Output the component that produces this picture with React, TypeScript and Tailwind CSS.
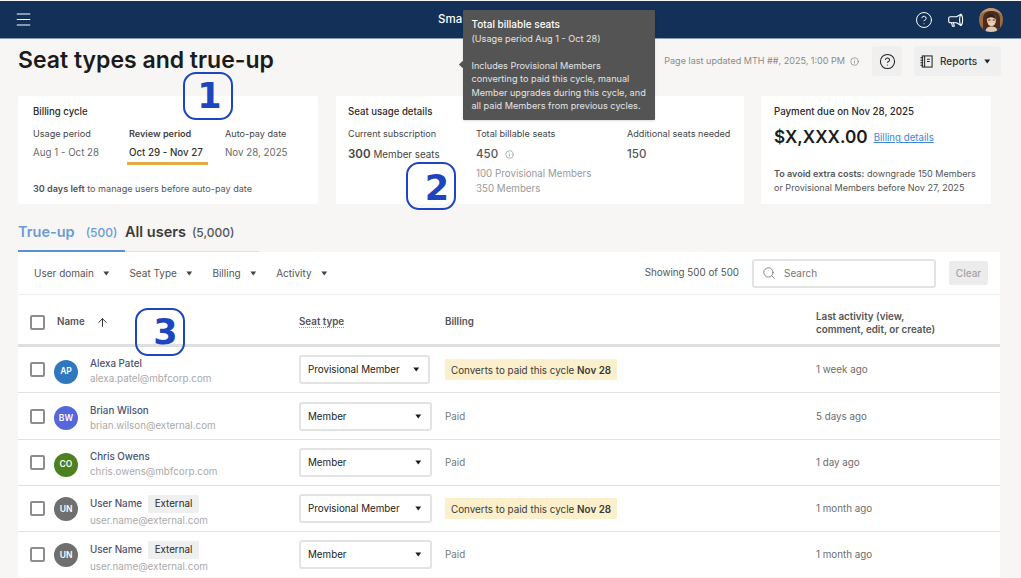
import React from "react";
import { CircleHelp, Info, Menu, Search, ArrowUp } from "lucide-react";

const Caret = ({ className = "" }: { className?: string }) => (
  <svg viewBox="0 0 10 7" className={`w-[6.500px] h-[5px] ${className}`}>
    <path d="M0.5 0.5h9L5 6.5z" fill="currentColor" />
  </svg>
);

const Megaphone = () => (
  <svg viewBox="0 0 16 16" className="w-[16px] h-[16px]" fill="none" stroke="#fff" strokeWidth="1.100" strokeLinejoin="round" strokeLinecap="round">
    <path d="M2.300 4.800h6.200L13 2.200c1.300 1 1.600 3.300 1.600 5.800s-.3 4.500-1.600 5.500L8.500 10.700H2.300C1.300 10.700.7 10 .7 9.300V6.200c0-.7.6-1.400 1.600-1.400z" />
    <path d="M3.500 10.700l1 3.600h1.800l-.8-3.600" />
    <path d="M12.800 2.300c-1 1.300-1.200 3.500-1.200 5.700s.2 4.300 1.200 5.500" />
  </svg>
);

const Avatar = () => (
  <svg viewBox="0 0 24 24" className="w-[24px] h-[24px] rounded-full">
    <rect width="24" height="24" fill="#9b6a45" />
    <path d="M0 0h24v10c-2-5-4-7-12-7S2 5 0 10z" fill="#c09a72" />
    <path d="M4 24V11C4 5 8 3 12.500 3S21 5 21 11v13z" fill="#4a2b1c" />
    <ellipse cx="12.500" cy="12" rx="4.600" ry="6.200" fill="#e8c4a8" />
    <path d="M7.500 11c.5-4 3-5.500 5.500-5.500 2.200.5 4 2.500 4 6-2-2.500-5.500-3.500-9.500-.5z" fill="#33201a" />
    <path d="M9 12h2.500M13.800 12h2.500" stroke="#3a2a24" strokeWidth="0.900" />
    <path d="M6 24c1-4.500 3.500-5.500 6.500-5.500S18 19.500 19 24z" fill="#d8c8b4" />
    <path d="M10.500 15.500c1.300.8 2.700.8 4 0" stroke="#f6eee8" strokeWidth="0.800" fill="none" />
  </svg>
);

const Badge = ({ n, className }: { n: string; className: string }) => (
  <div className={`absolute w-[50px] h-[48px] rounded-[13px] border-[2.750px] border-[#1d45bf] flex items-center justify-center text-[#1d45bf] text-[35px] font-bold font-['DejaVu_Sans',sans-serif] leading-none ${className}`}>
    {n}
  </div>
);

const Select = ({ label, wide = true }: { label: string; wide?: boolean }) => (
  <div className={`h-[29px] ${wide ? "w-[133px]" : "w-[131px]"} bg-white border-2 border-[#e3e3e3] rounded-[3px] flex items-center justify-between pl-[7px] pr-[9px] text-[9.800px] text-[#222]`}>
    <span className="pt-[2px]">{label}</span>
    <Caret className="text-[#1c1c1c]" />
  </div>
);

const Checkbox = () => <div className="w-[15px] h-[15px] rounded-[2px] border-2 border-[#8d8d8d] bg-white" />;

const Converts = () => (
  <span className="inline-block bg-[#fbf0cb] text-[#3b3a36] text-[9.850px] px-[6px] pt-[4px] pb-[3px] leading-[14px] rounded-[1px]">
    Converts to paid this cycle <b className="font-semibold">Nov 28</b>
  </span>
);

type RowData = {
  initials: string;
  color: string;
  name: string;
  email: string;
  external?: boolean;
  seat: string;
  converts?: boolean;
  activity: string;
  height: string;
};

const rows: RowData[] = [
  { initials: "AP", color: "bg-[#2f78c0]", name: "Alexa Patel", email: "alexa.patel@mbfcorp.com", seat: "Provisional Member", converts: true, activity: "1 week ago", height: "h-[46px]" },
  { initials: "BW", color: "bg-[#5667dc]", name: "Brian Wilson", email: "brian.wilson@external.com", seat: "Member", activity: "5 days ago", height: "h-[47px]" },
  { initials: "CO", color: "bg-[#4b8121]", name: "Chris Owens", email: "chris.owens@mbfcorp.com", seat: "Member", activity: "1 day ago", height: "h-[46px]" },
  { initials: "UN", color: "bg-[#6f6f6f]", name: "User Name", email: "user.name@external.com", external: true, seat: "Provisional Member", converts: true, activity: "1 month ago", height: "h-[46px]" },
  { initials: "UN", color: "bg-[#6f6f6f]", name: "User Name", email: "user.name@external.com", external: true, seat: "Member", activity: "1 month ago", height: "h-[45px]" },
];

const Row = ({ row, index }: { row: RowData; index: number }) => (
  <div className={`${row.height} grid grid-cols-[281px_146px_371px_1fr] items-center border-b-[1.500px] border-[#e2e2e2] last:border-b-0`}>
    <div className="flex items-center pl-[12px]">
      <Checkbox />
      <div className={`ml-[9px] ${row.external ? "mt-[1px]" : "mt-[4px]"} w-[24px] h-[24px] rounded-full ${row.color} text-white text-[8.500px] font-semibold flex items-center justify-center`}>
        {row.initials}
      </div>
      <div className={`ml-[12px] ${row.external ? "mt-[6px]" : "mt-[4px]"}`}>
        <div className="flex items-center gap-[6px] text-[9.800px] font-medium text-[#4d5272] leading-[14px]">
          {row.name}
          {row.external && (
            <span className="bg-[#efefef] text-[#2a2a2a] font-normal px-[6.500px] h-[18px] flex items-center rounded-[1px]">External</span>
          )}
        </div>
        <div className="text-[9.800px] text-[#a9a9a9] leading-[14px] mt-[1px]">{row.email}</div>
      </div>
    </div>
    <Select label={row.seat} wide={index !== 0} />
    <div className={`text-[9.800px] text-[#787878] ${row.converts ? "" : "mt-[2px]"}`}>{row.converts ? <Converts /> : "Paid"}</div>
    <div className="text-[9.800px] text-[#6d6d6d] mt-[2px]">{row.activity}</div>
  </div>
);

const Filter = ({ label }: { label: string }) => (
  <div className="flex items-center gap-[9px] text-[10px] text-[#555]">
    {label}
    <Caret className="text-[#444]" />
  </div>
);

export default function App() {
  return (
    <div className="relative w-[1021px] h-[578px] overflow-hidden bg-[#f7f6f5] font-['Inter',sans-serif] pt-px">
      {/* Top bar */}
      <header className="h-[38px] bg-[#123058] border-b border-[#8b9cb5] flex items-center justify-between pl-[14px] pr-[18px]">
        <Menu className="w-[19px] h-[19px] text-white" strokeWidth={1.300} />
        <div className="ml-[405px] text-[11.500px] font-medium text-white">Sma</div>
        <div className="flex-1" />
        <div className="flex items-center gap-[15px]">
          <CircleHelp className="w-[18px] h-[18px] text-white" strokeWidth={1.300} />
          <Megaphone />
          <Avatar />
        </div>
      </header>

      {/* Title row */}
      <div className="h-[57px] flex items-center pl-[18px] pr-[20px]">
        <h1 className="text-[23px] font-semibold text-[#1b1b1b] mb-[14px]">Seat types and true-up</h1>
        <div className="flex-1" />
        <div className="flex items-center gap-[5px] text-[9.050px] text-[#8a8a8a] mb-[13px]">
          Page last updated MTH ##, 2025, 1:00 PM
          <Info className="w-[9px] h-[9px]" />
        </div>
        <div className="ml-[13px] mb-[13px] w-[30px] h-[30px] bg-[#efefef] rounded-[3px] flex items-center justify-center">
          <CircleHelp className="w-[17px] h-[17px] text-[#222]" strokeWidth={1.500} />
        </div>
        <div className="ml-[12px] mb-[13px] w-[87px] h-[30px] bg-[#efefef] rounded-[3px] flex items-center pl-[6px] gap-[7px] text-[10px] font-medium text-[#333]">
          <svg viewBox="0 0 14 14" className="w-[13px] h-[13px]" fill="none" stroke="#222" strokeWidth="1.100">
            <rect x="2.500" y="1" width="10.500" height="12" />
            <path d="M5 1v12M7.500 4.500h3M7.500 7h3M.5 3h3M.5 5.700h3M.5 8.400h3M.5 11h3" />
          </svg>
          Reports
          <Caret className="text-[#222]" />
        </div>
      </div>

      {/* Summary cards */}
      <div className="flex pl-[18px] items-start">
        <section className="w-[300px] h-[108px] bg-white rounded-[2px] pt-[9px] pl-[15px]">
          <div className="text-[9.650px] font-medium text-[#2a2a2a] leading-[14px]">Billing cycle</div>
          <div className="flex mt-[8px] text-[9.100px] leading-[14px]">
            <div className="w-[96px]">
              <div className="text-[#444]">Usage period</div>
              <div className="mt-[5px] text-[#6a6a6a] text-[9.750px]">Aug 1 - Oct 28</div>
            </div>
            <div className="w-[96px]">
              <div className="font-semibold text-[#444]">Review period</div>
              <div className="mt-[5px] text-[#333] font-medium text-[9.750px] pb-[2px] border-b-[3px] border-[#dfac47] w-[81px] -ml-[2px] pl-[2px]">Oct 29 - Nov 27</div>
            </div>
            <div>
              <div className="text-[#444]">Auto-pay date</div>
              <div className="mt-[5px] text-[#6a6a6a] text-[9.750px]">Nov 28, 2025</div>
            </div>
          </div>
          <div className="mt-[17px] text-[9.100px] text-[#555] leading-[14px]"><b className="font-semibold">30 days left</b> to manage users before auto-pay date</div>
        </section>

        <section className="ml-[18px] w-[408px] h-[108px] bg-white rounded-[2px] pt-[9px] pl-[12px]">
          <div className="text-[9.650px] font-medium text-[#2a2a2a] leading-[14px]">Seat usage details</div>
          <div className="flex mt-[8px] text-[9.100px] leading-[14px] text-[#444]">
            <div className="w-[128px]">
              <div>Current subscription</div>
              <div className="mt-[6px] text-[9.800px] flex items-baseline gap-[3px]"><b className="font-semibold text-[11.500px]">300</b> Member seats</div>
            </div>
            <div className="w-[151px]">
              <div>Total billable seats</div>
              <div className="mt-[6px] flex items-center gap-[7px] text-[11.500px] font-medium text-[#555]">450 <Info className="w-[9px] h-[9px] text-[#999]" /></div>
              <div className="mt-[5px] text-[#999] text-[9.750px] leading-[15px]">100 Provisional Members<br />350 Members</div>
            </div>
            <div>
              <div>Additional seats needed</div>
              <div className="mt-[6px] text-[11.500px] font-medium text-[#555]">150</div>
            </div>
          </div>
        </section>

        <section className="ml-[17px] w-[230px] h-[108px] bg-white rounded-[2px] pt-[9px] pl-[13px]">
          <div className="text-[9.700px] font-medium text-[#2a2a2a] leading-[14px]">Payment due on Nov 28, 2025</div>
          <div className="mt-[6px] flex items-center gap-[6px]">
            <span className="text-[17.200px] font-semibold text-[#1b1b1b] leading-[24px]">$X,XXX.00</span>
            <span className="text-[9.700px] text-[#3f86d4] underline mt-[3px]">Billing details</span>
          </div>
          <div className="mt-[18px] text-[9.050px] leading-[13.500px] text-[#555]"><b className="font-semibold">To avoid extra costs:</b> downgrade 150 Members<br />or Provisional Members before Nov 27, 2025</div>
        </section>
      </div>

      {/* Tabs */}
      <div className="ml-[18px] mt-[17px] h-[31px] w-[241px] flex items-start border-b border-[#e2e2e2]">
        <div className="w-[107px] h-[31px] border-b-2 border-[#5a91d6] text-[#6c9bd6] flex items-baseline pt-[2px]">
          <span className="text-[14.500px] font-semibold leading-[18px]">True-up</span>
          <span className="ml-[11px] text-[12px] font-medium">(500)</span>
        </div>
        <div className="text-[#3c3c3c] flex items-baseline pt-[2px]">
          <span className="text-[14.500px] font-semibold leading-[18px]">All users</span>
          <span className="ml-[6px] text-[12px] font-medium text-[#555]">(5,000)</span>
        </div>
      </div>

      {/* Table */}
      <div className="ml-[18px] w-[982px] bg-white">
        <div className="h-[43px] flex items-center border-b border-[#ebedf3] pl-[16px] pr-[12px]">
          <div className="flex gap-[20px]">
            <Filter label="User domain" />
            <Filter label="Seat Type" />
            <Filter label="Billing" />
            <Filter label="Activity" />
          </div>
          <div className="flex-1" />
          <span className="text-[9.800px] text-[#555] pt-[1px]">Showing 500 of 500</span>
          <div className="ml-[13px] w-[184px] h-[29px] border-2 border-[#e3e3e3] rounded-[3px] flex items-center pl-[8px] text-[10px] text-[#777] gap-[8px]">
            <Search className="w-[14px] h-[14px] text-[#666]" strokeWidth={1.300} />
            Search
          </div>
          <div className="ml-[13px] w-[39px] h-[24px] bg-[#ececec] rounded-[2px] flex items-center justify-center text-[10px] font-medium text-[#a3a3a3]">Clear</div>
        </div>

        <div className="h-[52px] pt-[6px] grid grid-cols-[281px_146px_371px_1fr] items-center border-b-[3.500px] border-[#dfdfdf] text-[9.800px] font-semibold text-[#555]">
          <div className="flex items-center pl-[12px]">
            <Checkbox />
            <span className="ml-[12px]">Name</span>
            <ArrowUp className="ml-[11px] w-[13px] h-[13px] text-[#222]" strokeWidth={1.700} />
          </div>
          <div><span className="border-b border-dotted border-[#999]">Seat type</span></div>
          <div>Billing</div>
          <div className="leading-[13px]">Last activity (view,<br />comment, edit, or create)</div>
        </div>

        {rows.map((r, i) => (
          <Row key={i} row={r} index={i} />
        ))}
      </div>

      {/* Tooltip */}
      <div className="absolute left-[463px] top-[10px] w-[192px] h-[110px] bg-[#545454] rounded-[1px] shadow-sm text-[#e4e4e4] text-[9.150px] leading-[13.500px] pt-[8px] pl-[8.500px]">
        <div className="font-medium text-white text-[10px]">Total billable seats</div>
        <div>(Usage period Aug 1 - Oct 28)</div>
        <div className="mt-[13.500px]">Includes Provisional Members<br />converting to paid this cycle, manual<br />Member upgrades during this cycle, and<br />all paid Members from previous cycles.</div>
      </div>
      <div className="absolute left-[460px] top-[62px] w-[5px] h-[5px] rotate-45 bg-[#545454]" />

      <Badge n="1" className="left-[183px] top-[72px] pl-[3px]" />
      <Badge n="2" className="left-[406px] top-[162px] pl-[12px] pt-[4px]" />
      <Badge n="3" className="left-[135px] top-[308px] pl-[11px]" />
    </div>
  );
}
